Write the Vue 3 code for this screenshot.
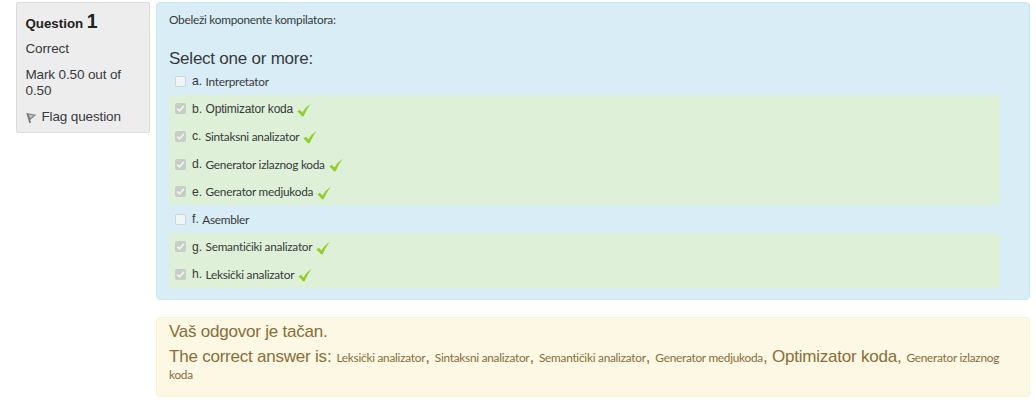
<script setup>
const options = [
  { key: 'a', text: 'Interpretator', correct: false },
  { key: 'b', text: 'Optimizator koda', correct: true, plain: true },
  { key: 'c', text: 'Sintaksni analizator', correct: true },
  { key: 'd', text: 'Generator izlaznog koda', correct: true },
  { key: 'e', text: 'Generator medjukoda', correct: true },
  { key: 'f', text: 'Asembler', correct: false },
  { key: 'g', text: 'Semantičiki analizator', correct: true },
  { key: 'h', text: 'Leksički analizator', correct: true },
]
</script>

<template>
  <main class="page">
    <aside class="info">
      <h3 class="number">Question <span>1</span></h3>
      <div class="state">Correct</div>
      <div class="grade">Mark 0.50 out of 0.50</div>
      <div class="flag">
        <svg width="11" height="12" viewBox="0 0 11 12">
          <path d="M1.4 1.8 L9 3.2 L4.2 7.2 Z" fill="#c4c4c4" stroke="#8c8c8c" stroke-width="1.3" />
          <path d="M1.4 1.4 L4.2 11" fill="none" stroke="#777" stroke-width="1.7" />
        </svg>
        <span>Flag question</span>
      </div>
    </aside>
    <div class="content">
      <section class="formulation">
        <p class="qtext cal">Obeleži komponente kompilatora:</p>
        <div class="prompt">Select one or more:</div>
        <div class="answers">
          <div v-for="o in options" :key="o.key" class="row" :class="{ correct: o.correct }">
            <span class="box" :class="{ checked: o.correct }">
              <svg v-if="o.correct" width="11" height="11" viewBox="0 0 11 11">
                <path d="M2.2 5.6 L4.5 7.9 L9 2.9" fill="none" stroke="#f1f5ef" stroke-width="1.6" />
              </svg>
            </span>
            <span class="letter">{{ o.key }}. </span>
            <span :class="o.plain ? 'plain' : 'cal'">{{ o.text }}</span>
            <svg v-if="o.correct" class="tick" width="14" height="14" viewBox="0 0 13 14" preserveAspectRatio="none">
              <path d="M0.3 8.4 L2.7 6.7 L5 9.4 Q8 4 12.8 0.8 Q8.9 6 6.1 13.2 L4.5 13.2 Q2.8 10.4 0.3 8.4 Z" fill="#93cd28" />
            </svg>
          </div>
        </div>
      </section>
      <section class="feedback">
        <div class="verdict">Vaš odgovor je tačan.</div>
        <div class="right">The correct answer is: <span class="cal">Leksički analizator</span>, <span class="cal">Sintaksni analizator</span>, <span class="cal">Semantičiki analizator</span>, <span class="cal">Generator medjukoda</span>, Optimizator koda, <span class="cal">Generator izlaznog koda</span></div>
      </section>
    </div>
  </main>
</template>

<style>
body { background: #fff; }
</style>

<style scoped>
* { box-sizing: border-box; }
.page {
  display: flex;
  align-items: flex-start;
  width: 1036px;
  height: 403px;
  padding: 2px 6px 0 16px;
  font-family: "Liberation Sans", Arial, sans-serif;
  color: #373a3c;
  overflow: hidden;
}
.info {
  width: 134px;
  height: 131px;
  margin-right: 6px;
  padding: 7px 8px 0 8.5px;
  background: #ededed;
  border: 1px solid #dcdcdc;
  border-radius: 2px;
  font-size: 13.5px;
  letter-spacing: -0.13px;
  line-height: 16px;
}
.number { margin: 0; font-size: 13.3px; line-height: 22px; letter-spacing: 0; color: #222; }
.number span { font-size: 19.5px; }
.state { margin-top: 6px; }
.grade { margin-top: 10px; }
.flag { display: flex; align-items: center; gap: 5px; margin-top: 10px; }
.flag svg { margin-top: 2px; }
.content { width: 874px; }
.formulation {
  height: 298px;
  padding: 9px 29px 0 12px;
  background: #d9edf7;
  border: 1px solid #c4e8f2;
  border-radius: 4px;
}
.cal {
  font-family: Lato, "Liberation Sans", sans-serif;
  font-size: 11.8px;
  letter-spacing: -0.25px;
}
.qtext { margin: 0; line-height: 16px; }
.prompt { margin-top: 20px; font-size: 17px; line-height: 22px; letter-spacing: -0.23px; }
.answers { margin-top: -2.5px; }
.row { display: flex; align-items: center; height: 27.6px; padding-left: 6px; white-space: pre; }
.row.correct { background: #dff0d8; }
.box {
  width: 11px;
  height: 11px;
  margin-right: 6px;
  border: 1px solid #d0d5d6;
  border-radius: 2px;
  background: #f0f5f7;
}
.box.checked { background: #c9cdc7; border: 0; }
.box svg { display: block; }
.letter { font-size: 12.2px; }
.plain { font-size: 12px; letter-spacing: -0.2px; }
.tick { margin: 2px 0 0 4px; }
.feedback {
  height: 80px;
  margin-top: 17px;
  padding: 3px 12px 0;
  background: #fcf8e3;
  border: 1px solid #faf2cc;
  border-radius: 4px;
  color: #8a6d3b;
  font-size: 17px;
  line-height: 22px;
  letter-spacing: -0.22px;
}
.right { margin-top: 6px; line-height: 16px; }
.right .cal { margin-left: 0.6px; }
</style>
